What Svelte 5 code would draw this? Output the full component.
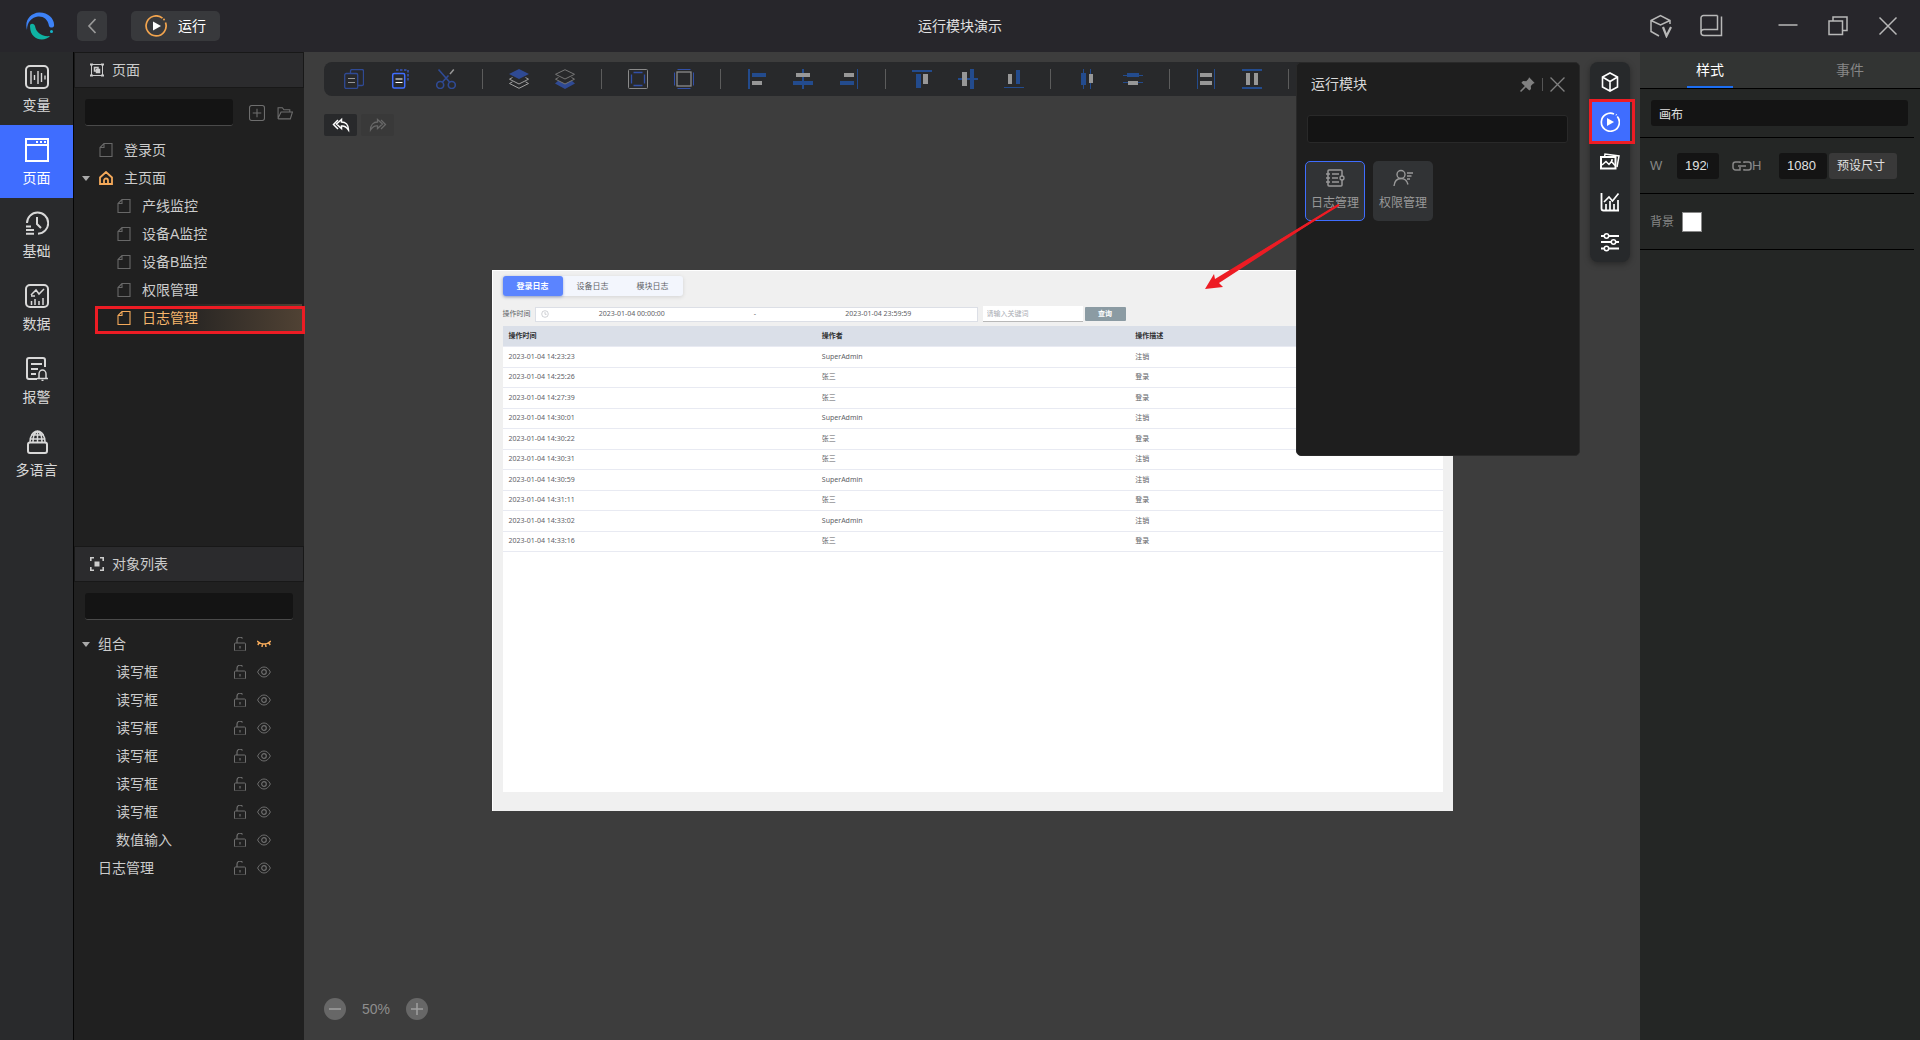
<script lang="ts">
  interface RailItem {
    icon: string;
    label: string;
  }

  interface PageNode {
    name: string;
    level: number;
    home?: boolean;
  }

  interface LayerNode {
    name: string;
    level: number;
    group?: boolean;
    hidden?: boolean;
  }

  const rail: RailItem[] = [
    { icon: 'variable', label: '变量' },
    { icon: 'window', label: '页面' },
    { icon: 'history', label: '基础' },
    { icon: 'data', label: '数据' },
    { icon: 'alarm', label: '报警' },
    { icon: 'globe', label: '多语言' },
  ];

  const pages: PageNode[] = [
    { name: '登录页', level: 0 },
    { name: '主页面', level: 0, home: true },
    { name: '产线监控', level: 1 },
    { name: '设备A监控', level: 1 },
    { name: '设备B监控', level: 1 },
    { name: '权限管理', level: 1 },
    { name: '日志管理', level: 1 },
  ];

  const layers: LayerNode[] = [
    { name: '组合', level: 0, group: true, hidden: true },
    ...Array.from({ length: 6 }, () => ({ name: '读写框', level: 1 })),
    { name: '数值输入', level: 1 },
    { name: '日志管理', level: 0 },
  ];

  // one array per toolbar group, separated by a rule
  const tools = [
    ['copy', 'paste', 'cut'],
    ['front', 'back'],
    ['group', 'ungroup'],
    ['alignLeft', 'alignCenter', 'alignRight'],
    ['alignTop', 'alignMiddle', 'alignBottom'],
    ['spreadH', 'spreadV'],
    ['sameWidth', 'sameHeight'],
  ];

  const dock = ['cube', 'play', 'images', 'chart', 'sliders'];
  const logTabs = ['登录日志', '设备日志', '模块日志'];

  const logs = [
    ['2023-01-04 14:23:23', 'SuperAdmin', '注销'],
    ['2023-01-04 14:25:26', '张三', '登录'],
    ['2023-01-04 14:27:39', '张三', '登录'],
    ['2023-01-04 14:30:01', 'SuperAdmin', '注销'],
    ['2023-01-04 14:30:22', '张三', '登录'],
    ['2023-01-04 14:30:31', '张三', '注销'],
    ['2023-01-04 14:30:59', 'SuperAdmin', '注销'],
    ['2023-01-04 14:31:11', '张三', '登录'],
    ['2023-01-04 14:33:02', 'SuperAdmin', '注销'],
    ['2023-01-04 14:33:16', '张三', '登录'],
  ];

  let activeRail = $state('页面');
  let activePage = $state('日志管理');
  let activeDock = $state('play');
  let activeLogTab = $state('登录日志');
  let activeTab = $state('样式');

  // blue and grey of the alignment icons
  const B = '#234b8d';
  const G = '#979797';
  const bar = (x: number, y: number, w: number, h: number, c: string) =>
    `<rect x="${x}" y="${y}" width="${w}" height="${h}" fill="${c}" stroke="none"/>`;

  // [viewBox size, inner markup]
  const icons: Record<string, [number, string]> = {
    variable: [24, '<rect x="1" y="1" width="22" height="22" rx="4" stroke-width="2"/><path d="M6 6v13M9.500 10v5M13 6v13M16.500 8v9M20 10.500v4" stroke-width="1.400"/>'],
    window: [24, '<path d="M1 1h22v22H1zM1 7h22" stroke-width="2"/><path d="M11 4h2M15 4h2M19 4h2" stroke-width="2"/>'],
    history: [24, '<path d="M2 12A10.600 10.600 0 1 1 13 22.700" stroke-width="2"/><path d="M12 6v7l4 4M1 15.500h5M1 19h8M1 22.800h8" stroke-width="2"/>'],
    data: [24, '<rect x="1" y="1" width="22" height="22" rx="4" stroke-width="2"/><path d="m6 11 5-5 3 4 5-5M6 12h4M6.500 17v4M10 15v6M14 17v4M18 14v7" stroke-width="1.500"/>'],
    alarm: [24, '<path d="M12 22H4a2 2 0 0 1-2-2V3a2 2 0 0 1 2-2h14a2 2 0 0 1 2 2v7M6 7h11M6 12h7M6 17h5" stroke-width="2"/><path d="M12 21.500h11M14 21v-4a3.500 4 0 0 1 7 0v4M16.500 23.500h2" stroke-width="1.500"/>'],
    globe: [24, '<path d="M5 12a7.500 11 0 0 1 15 0M12.500 1v11M8 12c0-5 1-9 4.500-11C16 3 17 7 17 12M6 5h13M5 9h15" stroke-width="1.500"/><rect x="3" y="12.500" width="19" height="10.500" rx="2" stroke-width="2"/>'],
    frame: [14, '<path d="M1.500 1.500h11v11h-11z"/><path d="M0 1.500h3M11 1.500h3M0 12.500h3M11 12.500h3" stroke-width="2"/><path d="M4.500 4.500h3.500v3.500h-3.500zM6.500 6.500h3v3h-3z" stroke-width="1.500"/>'],
    focus: [14, '<path d="M.8 4V.8H4M10 .8h3.200V4M13.200 10v3.200H10M4 13.200H.8V10" stroke-width="1.600"/><rect x="4.500" y="4.500" width="5" height="5" fill="currentColor" stroke="none"/>'],
    add: [15, '<rect x=".5" y=".5" width="14" height="14" rx="2"/><path d="M7.500 3.500v8M3.500 7.500h8"/>'],
    folder: [15, '<path d="M1 12V2.500h4l1.500 2H12V7M1 12.500 3.800 6.500h10.700L12.500 13H1.500z"/>'],
    page: [14, '<path d="M5 .5h8v13H1V4.500zM1 4.500h4V.5" stroke-width="1.100"/>'],
    home: [14, '<path d="M1 6.500 7 1l6 5.500V13H1zM5 13V9.500a2 2 0 0 1 4 0V13" stroke-width="1.800"/>'],
    lock: [14, '<rect x="1.500" y="6" width="11" height="8" rx="1"/><path d="M4 6V3a3 3 0 0 1 5.500-1.500M7 9v2.500" stroke-width="1.200"/>'],
    eye: [14, '<path d="M.6 7C2.500 3.500 4.500 2 7 2s4.500 1.500 6.400 5C11.500 10.500 9.500 12 7 12S2.500 10.500.6 7z"/><circle cx="7" cy="7" r="2.300" stroke-width="1.200"/>'],
    eyeOff: [14, '<path d="M0 4c4 4 10 4 14 0M2.300 5.500.8 8M5.500 7 5 10M8.500 7 9 10M11.700 5.500 13.200 8" stroke-width="1.500"/>'],
    copy: [20, '<g stroke="#2f4a94" stroke-width="1.300"><path d="M6.500 4V2a1.500 1.500 0 0 1 1.500-1.500h10A1.500 1.500 0 0 1 19.500 2v13a1.500 1.500 0 0 1-1.500 1.500h-4"/><rect x=".7" y="4.500" width="13" height="15" rx="1.500"/></g><path d="M4 9.500h7M4 13.500h7" stroke="#979797"/>'],
    paste: [20, '<rect x="2.700" y="4.500" width="12" height="14.500" rx="1.500" stroke="#3f6dff" stroke-width="1.500"/><path d="M6 1h12v12" stroke="#3f6dff" stroke-dasharray="2.500 1.500"/><path d="M5.500 10h7M5.500 13.500h7" stroke="#fff" stroke-width="1.200"/>'],
    cut: [20, '<g stroke="#2f4a94" stroke-width="1.600"><circle cx="4.200" cy="16" r="3.500"/><circle cx="15.800" cy="16" r="3.500"/><path d="m2.500.5 11 12.500M12.500 6.500l-6 6.500"/></g><path d="M17.800.5 14 5" stroke="#979797" stroke-width="1.500"/>'],
    front: [20, '<path d="M10 0 20 5 10 10 0 5z" fill="#2f4a94" stroke="none"/><path d="M3.500 8.500.5 10.200 10 15l9.500-4.800-3-1.700M3.500 12.800.5 14.500l9.500 4.800 9.500-4.800-3-1.700" stroke="#a0a0a0"/>'],
    back: [20, '<path d="M10 13.500 3.500 11.500 0 14.500 10 20l10-5.500-3.500-3z" fill="#2f4a94" stroke="none"/><path d="M10 .7 19.500 5.300 10 10 .5 5.300zM3.500 8.500.5 10.200 10 15l9.500-4.800-3-1.700" stroke="#777" fill="#28292b"/>'],
    group: [20, '<rect x=".5" y=".5" width="19" height="19" rx="1" stroke="#8a8a8a"/><path d="M3.500 5.500v9M16.500 5.500v9M5.500 3.500h9M5.500 16.500h9" stroke="#3250a8" stroke-width="1.300"/>'],
    ungroup: [20, '<rect x="3" y="3" width="14" height="14" stroke="#8a8a8a" stroke-width="1.300"/><path d="M.5 3.500v13M19.500 3.500v13M3.500.5h13M3.500 19.500h13" stroke="#3250a8"/>'],
    alignLeft: [20, bar(1, 0, 2, 20, B) + bar(5, 4, 14, 4, B) + bar(5, 12, 10, 4, G)],
    alignCenter: [20, bar(9, 0, 2, 20, B) + bar(3, 4, 14, 4, G) + bar(0, 12, 20, 4, B)],
    alignRight: [20, bar(18, 0, 1, 20, B) + bar(5, 4, 10, 4, G) + bar(1, 12, 14, 4, B)],
    alignTop: [20, bar(0, 1, 20, 2, B) + bar(4, 5, 5, 14, B) + bar(11, 5, 5, 10, G)],
    alignMiddle: [20, bar(0, 9, 20, 2, B) + bar(4, 3, 5, 14, G) + bar(12, 0, 4, 20, B)],
    alignBottom: [20, bar(0, 18, 20, 1, B) + bar(4, 5, 4, 10, G) + bar(12, 1, 4, 14, B)],
    spreadH: [20, bar(6, 0, 1, 20, B) + bar(13, 0, 1, 20, B) + bar(4, 4, 5, 12, B) + bar(12, 5, 4, 9, G)],
    spreadV: [20, bar(0, 6, 20, 1, B) + bar(0, 13, 20, 1, B) + bar(4, 4, 12, 4, B) + bar(5, 12, 10, 4, G)],
    sameWidth: [20, bar(1, 0, 1, 20, B) + bar(18, 0, 1, 20, B) + bar(4, 4, 12, 4, G) + bar(4, 12, 12, 4, G)],
    sameHeight: [20, bar(0, 0, 20, 2, B) + bar(0, 18, 20, 2, B) + bar(4, 4, 4, 12, G) + bar(12, 4, 4, 12, G)],
    undo: [18, '<path d="M6 4 1.500 8.500 6 13" stroke-width="1.500"/><path d="M9.500 3.500 4.500 8l5 4.500V10c3-.5 5 1 7 4 0-5-3-8-7-8z" stroke-width="1.500"/>'],
    redo: [18, '<path d="m12 4 4.500 4.500L12 13" stroke-width="1.300"/><path d="m8.500 3.500 5 4.500-5 4.500V10c-3-.5-5 1-7 4 0-5 3-8 7-8z" stroke-width="1.300"/>'],
    cube: [20, '<path d="M10 1 17.500 5v10L10 19 2.500 15V5zM2.500 5 10 9.500 17.500 5M10 9.500V19" stroke-width="1.600"/>'],
    play: [20, '<path d="M17.300 4.500A9 9 0 1 1 14 2M16 2.500l.6.600" stroke-width="1.700"/><path d="m7 6 7 4-7 4z" fill="currentColor" stroke="none"/>'],
    images: [20, '<path d="M4.500 5 5 2l14 2-2 11" stroke-width="1.500"/><rect x="1" y="5" width="14.500" height="11.500" stroke-width="2"/><path d="m2 13 4-3.500 3 3 2.500-3 3.500 4M11 8h2" stroke-width="1.500"/>'],
    chart: [20, '<path d="M1.500 1v15.500a2 2 0 0 0 2 2H19" stroke-width="1.800"/><path d="m4 10 5-5 3.500 4 6-7.500" stroke-width="1.700"/><path d="M6 12v6M10 9v9M14 12v6M18 8v10" stroke-width="1.700"/>'],
    sliders: [20, '<path d="M1 4h4M9 4h10M1 10h10M16 10h3M1 16.500h4M9 16.500h10" stroke-width="1.800"/><circle cx="6.500" cy="4" r="2.200" stroke-width="1.500"/><circle cx="13.500" cy="10" r="2.200" stroke-width="1.500"/><circle cx="6.500" cy="16.500" r="2.200" stroke-width="1.500"/>'],
    pin: [14, '<path d="m8.500.3 5.200 5.200-1.600.8-2 2 .2 3-1.600 1.400L5.500 9.500 1 14l-1-1 4.500-4.500L1.300 5.300l1.500-1.500 3 .1 2-2z" fill="currentColor" stroke="none"/>'],
    close: [14, '<path d="m.5.5 13 13M13.500.5l-13 13" stroke-width="1.200"/>'],
    log: [20, '<rect x="3" y="2" width="14" height="16" rx="1" stroke-width="1.500"/><path d="M1 6h4M1 10h4M1 14h4M7 6h7M7 10h6M7 14h7" stroke-width="1.300"/><circle cx="17" cy="10" r="2" fill="#313335" stroke-width="1.300"/>'],
    user: [20, '<circle cx="8" cy="6.500" r="4" stroke-width="1.400"/><path d="M1 18c.5-5 3-7.500 7-7.500s6 2 7 6M14 5h6M14 8h4.500M14 11h3" stroke-width="1.400"/>'],
    cubeV: [24, '<path d="M21 10V6.500L11.500 1.500 2 6.500v11l8 4.500M2 6.500 11.500 11 21 6.500" stroke-width="1.500"/><path d="m14 13 3.500 9 4.500-9" stroke-width="2.200"/>'],
    book: [24, '<path d="M18.500 1.500H4.500a2.500 2.500 0 0 0-2.500 2.500v15M18.500 1.500v14H5a3 3 0 0 0 0 6h17.500V2.500" stroke-width="1.500"/>'],
    minimize: [20, '<path d="M.5 9h19" stroke-width="1.500"/>'],
    restore: [20, '<path d="M5 5V1h14v13.500h-4M1 5h13.500v13.500H1z" stroke-width="1.500"/>'],
    exit: [20, '<path d="m1.500 1.500 17 17M18.500 1.500l-17 17" stroke-width="1.500"/>'],
    chevron: [16, '<path d="M11.500 1 5 8l6.500 7" stroke-width="1.700"/>'],
    minus: [12, '<path d="M0 6h12" stroke-width="1.500"/>'],
    plus: [12, '<path d="M0 6h12M6 0v12" stroke-width="1.500"/>'],
    clock: [8, '<circle cx="4" cy="4" r="3.300" stroke-width=".6"/><path d="M4 2v2.300h1.600" stroke-width=".6"/>'],
    link: [20, '<path d="M8 7V6H3.500A2.500 2.500 0 0 0 1 8.500v3A2.500 2.500 0 0 0 3.500 14H8v-3M12 7V6h4.500A2.500 2.500 0 0 1 19 8.500v3a2.500 2.500 0 0 1-2.500 2.500H12v-1M6 10h8" stroke-width="1.500"/>'],
  };
</script>

{#snippet icon(name: string, size?: number)}
  {@const [box, body] = icons[name]}
  <svg
    width={size ?? box}
    height={size ?? box}
    viewBox="0 0 {box} {box}"
    fill="none"
    stroke="currentColor"
    aria-hidden="true">{@html body}</svg
  >
{/snippet}

<div class="app">
  <header class="topbar">
    <div class="top-left">
      <svg class="logo" width="30" height="30" viewBox="0 0 30 30" fill="none" aria-hidden="true">
        <path d="M2 19C-1 9 6 2 14 1.500 23 1 30 8 29 15c-1 2-4 2-5 0C23 8 18 5 13 5.500 7 6 2 11 2 19z" fill="#3d82f7" />
        <path d="M5 15c0-3 4-3 5 0 1 6 6 11 15 10C20 31 5 30 5 15z" fill="#0fb3a3" />
        <circle cx="26.500" cy="20.500" r="1.500" fill="#15b5c8" />
      </svg>
      <button class="back" aria-label="返回">{@render icon('chevron')}</button>
      <button class="run">
        <svg width="22" height="22" viewBox="0 0 22 22" fill="none" aria-hidden="true">
          <path d="M17.500 3.200A10 10 0 1 0 20.500 7.500" stroke="#f2a44e" stroke-width="1.700" />
          <circle cx="19" cy="4.500" r="1" fill="#f2a44e" />
          <path d="m8 6.500 8 4.500-8 4.500z" fill="#fff" />
        </svg>
        运行
      </button>
    </div>
    <h1>运行模块演示</h1>
    <div class="top-right">
      <button aria-label="版本">{@render icon('cubeV')}</button>
      <button aria-label="手册">{@render icon('book')}</button>
      <span class="spacer"></span>
      <button aria-label="最小化">{@render icon('minimize')}</button>
      <button aria-label="还原">{@render icon('restore')}</button>
      <button aria-label="关闭">{@render icon('exit')}</button>
    </div>
  </header>

  <nav class="rail">
    {#each rail as item (item.label)}
      <button class:active={activeRail === item.label} onclick={() => (activeRail = item.label)}>
        {@render icon(item.icon)}
        <span>{item.label}</span>
      </button>
    {/each}
  </nav>

  <aside class="side">
    <section class="pages">
      <h2>{@render icon('frame')}页面</h2>
      <div class="search">
        <input type="text" aria-label="搜索页面" />
        <button aria-label="新建页面">{@render icon('add', 16)}</button>
        <button aria-label="新建文件夹">{@render icon('folder', 16)}</button>
      </div>
      <ul class="tree">
        {#each pages as p (p.name)}
          <li class:child={p.level === 1} class:active={activePage === p.name}>
            {#if p.home}<span class="caret"></span>{/if}
            <button onclick={() => (activePage = p.name)}>
              <span class="node-icon" class:home={p.home}>{@render icon(p.home ? 'home' : 'page')}</span>
              {p.name}
            </button>
            {#if p.name === '日志管理'}<span class="mark"></span>{/if}
          </li>
        {/each}
      </ul>
    </section>

    <section class="objects">
      <h2>{@render icon('focus')}对象列表</h2>
      <div class="search">
        <input type="text" aria-label="搜索对象" />
      </div>
      <ul class="tree">
        {#each layers as l}
          <li class:child={l.level === 1}>
            {#if l.group}<span class="caret"></span>{/if}
            <span class="layer-name">{l.name}</span>
            <button class="tiny" aria-label="锁定">{@render icon('lock')}</button>
            <button class="tiny" class:off={l.hidden} aria-label="显示">
              {@render icon(l.hidden ? 'eyeOff' : 'eye')}
            </button>
          </li>
        {/each}
      </ul>
    </section>
  </aside>

  <main class="workspace">
    <div class="stage">
      <div class="log-tabs">
        {#each logTabs as t (t)}
          <button class:active={activeLogTab === t} onclick={() => (activeLogTab = t)}>{t}</button>
        {/each}
      </div>
      <div class="filter">
        <span class="filter-label">操作时间</span>
        <div class="range">
          {@render icon('clock')}
          <input type="text" aria-label="开始时间" value="2023-01-04 00:00:00" />
          <span>-</span>
          <input type="text" aria-label="结束时间" value="2023-01-04 23:59:59" />
        </div>
        <input class="keyword" type="text" aria-label="关键词" placeholder="请输入关键词" />
        <button class="query">查询</button>
      </div>
      <div class="log-list">
        <table>
          <thead>
            <tr><th>操作时间</th><th>操作者</th><th>操作描述</th></tr>
          </thead>
          <tbody>
            {#each logs as row (row[0])}
              <tr>
                {#each row as cell}<td>{cell}</td>{/each}
              </tr>
            {/each}
          </tbody>
        </table>
      </div>
    </div>

    <div class="overlay">
      <div class="toolbar">
        {#each tools as group}
          {#each group as t (t)}
            <button aria-label={t}>{@render icon(t)}</button>
          {/each}
          <span class="rule"></span>
        {/each}
      </div>
      <div class="undo-redo">
        <button aria-label="撤销">{@render icon('undo')}</button>
        <button disabled aria-label="重做">{@render icon('redo')}</button>
      </div>
      <div class="zoom">
        <button aria-label="缩小">{@render icon('minus')}</button>
        <span>50%</span>
        <button aria-label="放大">{@render icon('plus')}</button>
      </div>
    </div>

    <section class="modules">
      <div class="modules-head">
        <h2>运行模块</h2>
        <button aria-label="固定">{@render icon('pin', 15)}</button>
        <span class="rule"></span>
        <button aria-label="关闭">{@render icon('close', 15)}</button>
      </div>
      <input type="text" aria-label="搜索模块" />
      <div class="cards">
        <button class="active">{@render icon('log')}日志管理</button>
        <button>{@render icon('user')}权限管理</button>
      </div>
    </section>

    <div class="dock">
      {#each dock as d (d)}
        <button class:active={activeDock === d} aria-label={d} onclick={() => (activeDock = d)}>
          {@render icon(d)}
          {#if d === 'play'}<span class="mark"></span>{/if}
        </button>
      {/each}
    </div>

    <!-- drag hint from the module card to the page -->
    <svg class="arrow" width="136" height="86" viewBox="0 0 136 86" aria-hidden="true">
      <path d="M0 85 9 70l1 5L133 0l1 1L14 79l4 4z" fill="#ed1c24" />
      <path d="M11 77 60 46l74-45" stroke="#ed1c24" stroke-width="2" fill="none" />
    </svg>
  </main>

  <aside class="props">
    <div class="tabs">
      {#each ['样式', '事件'] as t (t)}
        <button class:active={activeTab === t} onclick={() => (activeTab = t)}>{t}</button>
      {/each}
    </div>
    <div class="row name">
      <input type="text" aria-label="名称" value="画布" />
    </div>
    <div class="row size">
      <label for="w">W</label>
      <input id="w" class="w" type="text" value="1920" />
      <span class="link">{@render icon('link')}</span>
      <label for="h" class="h-label">H</label>
      <input id="h" class="h" type="text" value="1080" />
      <button>预设尺寸</button>
    </div>
    <div class="row bg">
      <label for="bg">背景</label>
      <input id="bg" type="color" value="#ffffff" />
    </div>
  </aside>
</div>

<style>
  :global(body) {
    background: #3d3d3d;
  }

  .app {
    display: grid;
    grid-template: 52px 1fr / 74px 230px 1fr 280px;
    min-height: 100vh;
    font: 14px/20px 'Liberation Sans', 'Noto Sans CJK SC', sans-serif;
    color: #ccc;
  }

  .app :global(*) {
    box-sizing: border-box;
  }

  button {
    display: flex;
    align-items: center;
    justify-content: center;
    margin: 0;
    padding: 0;
    border: 0;
    background: none;
    color: inherit;
    font: inherit;
    cursor: pointer;
  }

  input {
    min-width: 0;
    margin: 0;
    border: 0;
    font: inherit;
    color: inherit;
    outline: none;
  }

  svg {
    flex: none;
    display: block;
  }

  h1,
  h2 {
    margin: 0;
    font-size: 14px;
    font-weight: 400;
  }

  ul {
    margin: 0;
    padding: 0;
    list-style: none;
  }

  .mark {
    position: absolute;
    border: 3px solid #ed1c24;
    pointer-events: none;
  }

  /* top bar */
  .topbar {
    grid-column: 1 / -1;
    display: grid;
    grid-template-columns: 1fr auto 1fr;
    align-items: center;
    background: #27262b;
  }

  .top-left {
    display: flex;
    align-items: center;
    padding-left: 25px;
  }

  .back {
    width: 30px;
    height: 30px;
    margin: 0 24px 0 22px;
    border-radius: 5px;
    background: #38393c;
    color: #999;
  }

  .run {
    gap: 11px;
    width: 89px;
    height: 30px;
    border-radius: 5px;
    background: #38393c;
    color: #fff;
  }

  .topbar h1 {
    color: #e0e0e0;
  }

  .top-right {
    display: flex;
    justify-content: flex-end;
    padding-right: 7px;
    color: #b8b8b8;
  }

  .top-right button {
    width: 50px;
    height: 52px;
  }

  .spacer {
    width: 27px;
  }

  /* icon rail */
  .rail {
    border-right: 1px solid #050505;
    background: #292a2c;
    color: #d8d8d8;
  }

  .rail button {
    flex-direction: column;
    justify-content: flex-start;
    gap: 6px;
    width: 100%;
    height: 73px;
    padding-top: 13px;
  }

  .rail .active {
    background: #3f6dff;
    color: #fff;
  }

  /* pages and objects */
  .side {
    display: grid;
    grid-template: 1fr 1fr / minmax(0, 1fr);
    background: #202020;
  }

  .side h2 {
    display: flex;
    align-items: center;
    gap: 8px;
    height: 36px;
    padding-left: 15px;
    border: 1px solid #181818;
    background: #2b2b2d;
  }

  .search {
    display: flex;
    align-items: center;
    gap: 12px;
    padding: 11px 11px 10px;
  }

  .search input {
    flex: 1;
    height: 27px;
    padding: 0 8px;
    border-bottom: 1px solid #4a4a4a;
    border-radius: 3px;
    background: #141414;
  }

  .search input + button {
    margin-left: 4px;
  }

  .search button {
    color: #6e6e6e;
  }

  .tree li {
    position: relative;
    display: flex;
    align-items: center;
    height: 28px;
    padding-left: 25px;
  }

  .tree .child {
    padding-left: 43px;
  }

  .tree li > button:not(.tiny) {
    flex: 1;
    justify-content: flex-start;
    gap: 11px;
    height: 28px;
  }

  .tree .active {
    margin-right: 2px;
    background: linear-gradient(90deg, #202020 40%, #504234);
    color: #f4b56c;
  }

  .tree .mark {
    top: 2px;
    right: -3px;
    left: 21px;
    height: 28px;
    z-index: 1;
  }

  .node-icon {
    color: #686868;
  }

  .node-icon.home,
  .active .node-icon {
    color: #f4a95a;
  }

  .caret {
    position: absolute;
    left: 8px;
    border: 4px solid transparent;
    border-top: 5px solid #aaa;
    border-bottom: 0;
  }

  .objects .tree li {
    gap: 10px;
    padding: 0 33px 0 24px;
  }

  .objects .tree .child {
    padding-left: 42px;
  }

  .layer-name {
    flex: 1;
  }

  .tiny {
    color: #6e6e6e;
  }

  .tiny.off {
    color: #f4a95a;
  }

  /* workspace */
  .workspace {
    position: relative;
    display: grid;
    min-width: 0;
    overflow: hidden;
    background: #3d3d3d;
  }

  /* lets the selected row's frame reach over the workspace edge */
  .side {
    position: relative;
    z-index: 1;
  }

  .overlay {
    grid-area: 1 / 1;
    display: flex;
    flex-direction: column;
    align-items: flex-start;
    min-width: 0;
    padding: 10px 20px 20px;
    pointer-events: none;
  }

  .overlay button {
    pointer-events: auto;
  }

  .toolbar {
    display: flex;
    align-items: center;
    height: 34px;
    padding: 0 7px;
    border-radius: 8px;
    background: #28292b;
  }

  .toolbar button {
    width: 46px;
    height: 34px;
  }

  .toolbar .rule {
    width: 1px;
    height: 20px;
    margin: 0 13px;
    background: #5c5c5c;
  }

  .undo-redo {
    display: flex;
    gap: 4px;
    margin-top: 18px;
  }

  .undo-redo button {
    width: 33px;
    height: 22px;
    border-radius: 2px;
    background: #28292b;
    color: #fff;
  }

  .undo-redo button:disabled {
    background: #393939;
    color: #686868;
  }

  .zoom {
    display: flex;
    align-items: center;
    gap: 16px;
    margin-top: auto;
    color: #8e8e8e;
  }

  .zoom button {
    width: 22px;
    height: 22px;
    border-radius: 50%;
    background: #676767;
    color: #a0a0a0;
  }

  /* the 1920x1080 page at 50% */
  .stage {
    grid-area: 1 / 1;
    place-self: center;
    display: flex;
    flex-direction: column;
    width: 961px;
    height: 541px;
    margin-bottom: 11px;
    padding: 5px 10px 19px;
    border: solid #fff;
    border-width: 1px 0 0 1px;
    background: #f0f0f0;
    color: #606266;
    font: 7px/10px 'Noto Sans', 'Noto Sans CJK SC', sans-serif;
  }

  .log-tabs {
    display: flex;
    align-self: flex-start;
    border-radius: 3px;
    background: #f3f6fd;
    box-shadow: 0 1px 4px rgba(0, 0, 0, 0.12);
    font-size: 8px;
  }

  .log-tabs button {
    width: 60px;
    height: 20px;
    border-radius: 3px;
  }

  .log-tabs .active {
    background: #5b84ff;
    box-shadow: 0 1px 3px rgba(40, 70, 160, 0.4);
    color: #fff;
    font-weight: 700;
  }

  .filter {
    display: flex;
    align-items: center;
    margin: 10px 0 4px;
  }

  .filter-label {
    width: 32px;
  }

  .range {
    display: flex;
    align-items: center;
    width: 443px;
    height: 15px;
    margin-right: 5px;
    padding: 0 15px 0 5px;
    border: 1px solid #dcdfe6;
    background: #fff;
    color: #606266;
  }

  .range svg {
    color: #b0b3ba;
  }

  .range input {
    flex: 1;
    padding: 0;
    background: none;
    text-align: center;
  }

  .range span {
    width: 80px;
    text-align: center;
  }

  .keyword {
    width: 100px;
    height: 16px;
    margin-right: 2px;
    padding: 0 4px;
    border-bottom: 1px solid #b8b8b8;
    background: #fff;
  }

  .keyword::placeholder {
    color: #a8abb2;
  }

  .query {
    width: 41px;
    height: 14px;
    border-radius: 1px;
    background: #8b9ba3;
    color: #fff;
    font-weight: 700;
  }

  .log-list {
    flex: 1;
    background: #fff;
  }

  table {
    width: 100%;
    height: 226px;
    border-collapse: separate;
    border-spacing: 0;
    table-layout: fixed;
  }

  th,
  td {
    padding: 0 6px;
    border-bottom: 1px solid #e8eaf2;
    text-align: left;
  }

  th {
    height: 21px;
    background: #dadfe8;
    color: #303133;
    font-weight: 700;
  }

  /* floating module panel */
  .modules {
    position: absolute;
    top: 10px;
    right: 60px;
    width: 284px;
    height: 394px;
    padding: 0 11px 0 8px;
    border: 1px solid #292929;
    border-radius: 5px;
    background: #1e1e1e;
  }

  .modules-head {
    display: flex;
    align-items: center;
    gap: 7px;
    height: 42px;
    padding: 0 3px 0 6px;
    color: #808080;
  }

  .modules-head h2 {
    flex: 1;
    color: #d8d8d8;
  }

  .modules-head .rule {
    width: 1px;
    height: 13px;
    background: #555;
  }

  .modules > input {
    display: block;
    width: calc(100% - 2px);
    height: 28px;
    margin: 10px 0 18px 2px;
    padding: 0 8px;
    border: 1px solid #292929;
    border-radius: 3px;
    background: #141414;
  }

  .cards {
    display: flex;
    gap: 8px;
    color: #999;
    font-size: 12px;
    line-height: 18px;
  }

  .cards button {
    flex-direction: column;
    gap: 6px;
    width: 60px;
    height: 60px;
    padding-bottom: 2px;
    border: 1px solid transparent;
    border-radius: 5px;
    background: #313335;
  }

  .cards .active {
    border-color: #3f6dff;
  }

  .dock {
    position: absolute;
    top: 10px;
    right: 10px;
    width: 40px;
    border-radius: 8px;
    background: #27292b;
    box-shadow: 0 2px 6px rgba(0, 0, 0, 0.35);
    color: #fff;
  }

  .dock button {
    position: relative;
    width: 40px;
    height: 40px;
  }

  .dock .active {
    background: #3f6dff;
  }

  .dock .mark {
    inset: -3px -5px -2px -1px;
  }

  .arrow {
    position: absolute;
    top: 152px;
    right: 299px;
    pointer-events: none;
  }

  /* properties */
  .props {
    background: #242625;
    font-size: 12px;
  }

  .tabs {
    display: flex;
    height: 37px;
    border-bottom: 1px solid #000;
    background: #323433;
    font-size: 14px;
    color: #868686;
  }

  .tabs button {
    position: relative;
    flex: 1;
  }

  .tabs .active {
    color: #fff;
  }

  .tabs .active::after {
    content: '';
    position: absolute;
    bottom: 0;
    width: 46px;
    height: 2px;
    background: #1c6ef2;
  }

  .row {
    display: flex;
    align-items: center;
    height: 56px;
    margin-right: 6px;
    padding-left: 10px;
    border-bottom: 1px solid #000;
    color: #868686;
  }

  .row input:not([type='color']),
  .row button {
    height: 26px;
    border-radius: 3px;
  }

  .row input:not([type='color']) {
    padding: 0 8px;
    background: #141414;
    color: #e0e0e0;
  }

  .row.name {
    height: 49px;
    padding: 0 6px 0 11px;
  }

  .name input {
    flex: 1;
  }

  .size label {
    width: 27px;
    font-size: 13px;
  }

  .size input:not([type='color']) {
    font-size: 13px;
  }

  .size input.w:not([type='color']) {
    width: 42px;
    padding-right: 11px;
  }

  .link {
    margin-left: 13px;
  }

  .size .h {
    width: 48px;
  }

  .row button {
    width: 68px;
    margin-left: 2px;
    padding-right: 4px;
    background: #393939;
    color: #e0e0e0;
  }

  .bg label {
    width: 32px;
  }

  .bg input {
    width: 20px;
    height: 20px;
    padding: 0;
    border: 1px solid #888;
    appearance: none;
    background: #fff;
  }

  .bg input::-webkit-color-swatch-wrapper {
    padding: 0;
  }

  .bg input::-webkit-color-swatch {
    border: 0;
  }
</style>
